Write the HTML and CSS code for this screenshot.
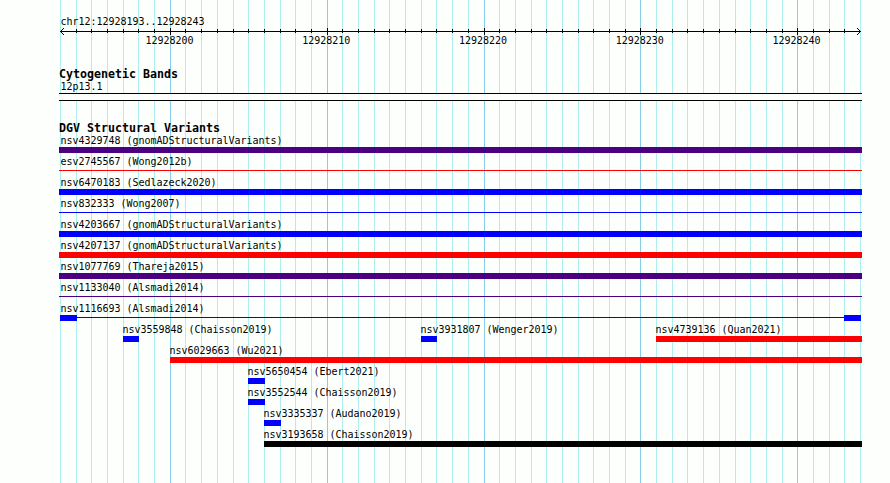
FILE: index.html
```html
<!DOCTYPE html>
<html lang="en">
<head>
<meta charset="utf-8">
<title>chr12:12928193..12928243</title>
<link rel="stylesheet" href="styles.css">
</head>
<body>
<svg class="grid" width="890" height="483" aria-hidden="true">
<path class="minor" d="M60.5 0V483M76.5 0V483M91.5 0V483M107.5 0V483M123.5 0V483M138.5 0V483M154.5 0V483M185.5 0V483M201.5 0V483M217.5 0V483M233.5 0V483M248.5 0V483M264.5 0V483M280.5 0V483M295.5 0V483M311.5 0V483M342.5 0V483M358.5 0V483M374.5 0V483M389.5 0V483M405.5 0V483M421.5 0V483M436.5 0V483M452.5 0V483M468.5 0V483M499.5 0V483M515.5 0V483M531.5 0V483M546.5 0V483M562.5 0V483M578.5 0V483M593.5 0V483M609.5 0V483M625.5 0V483M656.5 0V483M672.5 0V483M687.5 0V483M703.5 0V483M719.5 0V483M735.5 0V483M750.5 0V483M766.5 0V483M782.5 0V483M813.5 0V483M829.5 0V483M844.5 0V483M860.5 0V483"/>
<path class="major" d="M170.5 0V483M327.5 0V483M484.5 0V483M640.5 0V483M797.5 0V483"/>
</svg>
<main class="browser">
<header class="ruler">
<div class="label region">chr12:12928193..12928243</div>
<svg class="axis" width="803" height="7" viewBox="59 0 803 7" aria-hidden="true">
<path d="M60 3.5H861M76.5 1V5M91.5 1V5M107.5 1V5M123.5 1V5M138.5 1V5M154.5 1V5M185.5 1V5M201.5 1V5M217.5 1V5M233.5 1V5M248.5 1V5M264.5 1V5M280.5 1V5M295.5 1V5M311.5 1V5M342.5 1V5M358.5 1V5M374.5 1V5M389.5 1V5M405.5 1V5M421.5 1V5M436.5 1V5M452.5 1V5M468.5 1V5M499.5 1V5M515.5 1V5M531.5 1V5M546.5 1V5M562.5 1V5M578.5 1V5M593.5 1V5M609.5 1V5M625.5 1V5M656.5 1V5M672.5 1V5M687.5 1V5M703.5 1V5M719.5 1V5M735.5 1V5M750.5 1V5M766.5 1V5M782.5 1V5M813.5 1V5M829.5 1V5M844.5 1V5"/>
<path d="M170.5 0V7M327.5 0V7M484.5 0V7M640.5 0V7M797.5 0V7"/>
<path d="M63.5 0V1M62.5 1V2M61.5 2V3M61.5 4V5M62.5 5V6M63.5 6V7M857.5 0V1M858.5 1V2M859.5 2V3M859.5 4V5M858.5 5V6M857.5 6V7"/>
</svg>
<div class="ticks label"><span>12928200</span><span>12928210</span><span>12928220</span><span>12928230</span><span>12928240</span></div>
</header>
<section class="cyto">
<h2>Cytogenetic Bands</h2>
<div class="label">12p13.1</div>
<div class="band"></div>
</section>
<section class="variants">
<h2>DGV Structural Variants</h2>
<div class="row"><div class="variant full"><span class="label">nsv4329748 (gnomADStructuralVariants)</span><i class="bar purple"></i></div></div>
<div class="row"><div class="variant full"><span class="label">esv2745567 (Wong2012b)</span><i class="bar thin red"></i></div></div>
<div class="row"><div class="variant full"><span class="label">nsv6470183 (Sedlazeck2020)</span><i class="bar blue"></i></div></div>
<div class="row"><div class="variant full"><span class="label">nsv832333 (Wong2007)</span><i class="bar thin blue"></i></div></div>
<div class="row"><div class="variant full"><span class="label">nsv4203667 (gnomADStructuralVariants)</span><i class="bar blue"></i></div></div>
<div class="row"><div class="variant full"><span class="label">nsv4207137 (gnomADStructuralVariants)</span><i class="bar red"></i></div></div>
<div class="row"><div class="variant full"><span class="label">nsv1077769 (Thareja2015)</span><i class="bar purple"></i></div></div>
<div class="row"><div class="variant full"><span class="label">nsv1133040 (Alsmadi2014)</span><i class="bar thin purple"></i></div></div>
<div class="row"><div class="variant full"><span class="label">nsv1116693 (Alsmadi2014)</span><div class="split"><i class="bar blue"></i><i class="bar thin blue"></i><i class="bar blue"></i></div></div></div>
<div class="row"><div class="variant" style="margin-left:64px;width:16px"><span class="label">nsv3559848 (Chaisson2019)</span><i class="bar blue"></i></div><div class="variant" style="margin-left:282px;width:16px"><span class="label">nsv3931807 (Wenger2019)</span><i class="bar blue"></i></div><div class="variant" style="margin-left:219px;width:206px"><span class="label">nsv4739136 (Quan2021)</span><i class="bar red"></i></div></div>
<div class="row"><div class="variant" style="margin-left:111px;width:692px"><span class="label">nsv6029663 (Wu2021)</span><i class="bar red"></i></div></div>
<div class="row"><div class="variant" style="margin-left:189px;width:17px"><span class="label">nsv5650454 (Ebert2021)</span><i class="bar blue"></i></div></div>
<div class="row"><div class="variant" style="margin-left:189px;width:17px"><span class="label">nsv3552544 (Chaisson2019)</span><i class="bar blue"></i></div></div>
<div class="row"><div class="variant" style="margin-left:205px;width:17px"><span class="label">nsv3335337 (Audano2019)</span><i class="bar blue"></i></div></div>
<div class="row"><div class="variant" style="margin-left:205px;width:598px"><span class="label">nsv3193658 (Chaisson2019)</span><i class="bar black"></i></div></div>
</section>
</main>
</body>
</html>
```
FILE: styles.css
```css
* { box-sizing: border-box; }
body {
  margin: 0;
  height: 483px;
  overflow: hidden;
  background: #fdfffc;
  color: #000;
  font-family: "DejaVu Sans Mono", monospace;
}
.grid { position: absolute; top: 0; left: 0; z-index: -1; }
.grid path, .axis path { fill: none; stroke-width: 1; shape-rendering: crispEdges; }
.grid .minor { stroke: #afeeee; }
.grid .major { stroke: #87ceeb; }
.axis path { stroke: #000; }
.browser { width: 803px; margin-left: 59px; padding-top: 15px; }
.label {
  display: block;
  height: 13px;
  padding: 1px 0 0 1.4px;
  font-size: 10px;
  line-height: 12px;
  letter-spacing: -0.02px;
  white-space: nowrap;
}
.ruler { height: 53px; }
.axis { display: block; }
.ticks { display: flex; gap: 109px; padding: 0 0 0 86.4px; }
.ticks span { width: 47.75px; }
h2 {
  height: 12px;
  margin: 0;
  font-size: 11.63px;
  line-height: 12px;
  font-weight: bold;
  white-space: nowrap;
}
.cyto { height: 54px; }
.band { height: 8px; border: solid #000; border-width: 1px 0; background: #fdfffc; }
.row { display: flex; height: 21px; }
.variant { flex: none; }
.variant .label { margin-left: -2px; }
.variant.full { width: 803px; }
.variant.full .label { margin-left: 0; }
.bar { display: block; height: 6px; }
.bar.thin { height: 1px; margin-top: 2px; }
.split { display: flex; padding: 0 1px; }
.split .bar { width: 17px; }
.split .thin { flex: 1; }
.red { background: #f00; }
.blue { background: #00f; }
.purple { background: #4b0082; }
.black { background: #000; }
```
